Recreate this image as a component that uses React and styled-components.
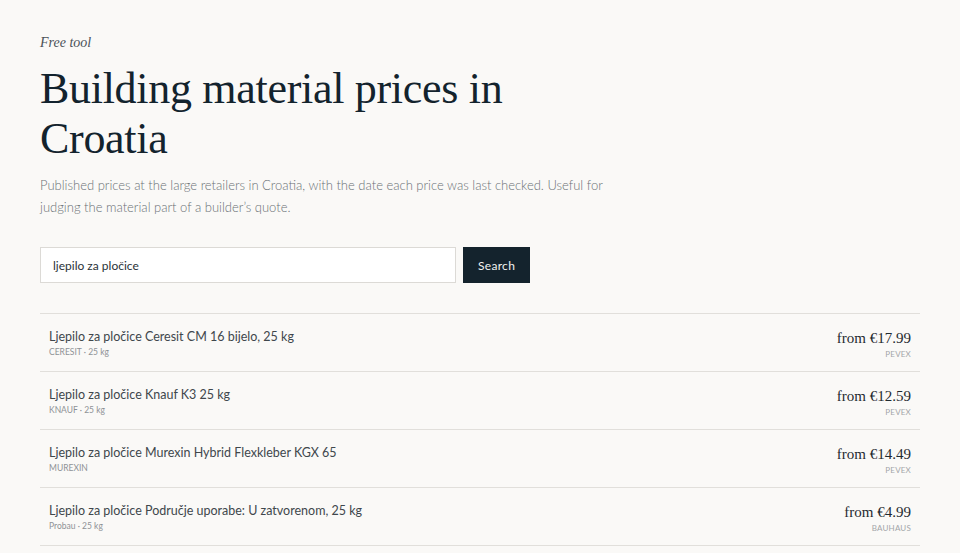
import React from "react";
import styled, { createGlobalStyle } from "styled-components";

const GlobalStyle = createGlobalStyle`
  html, body {
    margin: 0;
    padding: 0;
    background: #faf9f7;
  }
  body {
    font-family: Lato, "Noto Sans", sans-serif;
    color: #1b2a33;
  }
`;

const Page = styled.main`
  padding: 35px 40px 0;
  max-width: 880px;
`;

const Eyebrow = styled.p`
  margin: 0 0 13px;
  font-family: "Liberation Serif", serif;
  font-style: italic;
  font-size: 14px;
  color: #4a5257;
`;

const Title = styled.h1`
  margin: 0;
  max-width: 500px;
  font-family: "Liberation Serif", "DejaVu Serif", serif;
  font-weight: 400;
  font-size: 44px;
  line-height: 50px;
  letter-spacing: -0.3px;
  color: #13232d;
`;

const Lede = styled.p`
  margin: 10px 0 0;
  max-width: 600px;
  font-size: 13px;
  font-weight: 300;
  line-height: 22px;
  color: #6b7176;
`;

const SearchForm = styled.form`
  display: flex;
  gap: 7px;
  margin-top: 29px;
`;

const SearchInput = styled.input`
  box-sizing: border-box;
  width: 416px;
  height: 36px;
  padding: 0 12px;
  border: 1px solid #dcdad6;
  background: #fff;
  font-family: inherit;
  font-size: 12px;
  color: #2a3237;
  outline: none;
`;

const SearchButton = styled.button`
  height: 36px;
  padding: 0 15px;
  border: 0;
  background: #14232d;
  color: #f2f2f0;
  font-family: inherit;
  font-size: 12px;
  letter-spacing: 0.3px;
`;

const Results = styled.ul`
  list-style: none;
  margin: 30px 0 0;
  padding: 0;
  border-top: 1px solid #e1dfdb;
`;

const Row = styled.li`
  display: flex;
  justify-content: space-between;
  align-items: flex-start;
  height: 58px;
  padding: 15px 9px 0;
  box-sizing: border-box;
  border-bottom: 1px solid #e1dfdb;
`;

const Name = styled.div`
  font-size: 12.5px;
  color: #40474c;
  line-height: 16px;
`;

const Meta = styled.div`
  margin-top: 1px;
  font-size: 8.5px;
  color: #8e9296;
  line-height: 12px;
`;

const PriceBox = styled.div`
  text-align: right;
`;

const Price = styled.div`
  font-family: "Liberation Serif", serif;
  font-size: 15px;
  line-height: 18px;
  color: #1f2a30;
`;

const Store = styled.div`
  margin-top: 2px;
  font-size: 8px;
  letter-spacing: 0.2px;
  color: #a3a6a9;
`;

const items = [
  { name: "Ljepilo za pločice Ceresit CM 16 bijelo, 25 kg", meta: "CERESIT · 25 kg", price: "17.99", store: "PEVEX" },
  { name: "Ljepilo za pločice Knauf K3 25 kg", meta: "KNAUF · 25 kg", price: "12.59", store: "PEVEX" },
  { name: "Ljepilo za pločice Murexin Hybrid Flexkleber KGX 65", meta: "MUREXIN", price: "14.49", store: "PEVEX" },
  { name: "Ljepilo za pločice Područje uporabe: U zatvorenom, 25 kg", meta: "Probau · 25 kg", price: "4.99", store: "BAUHAUS" },
];

export default function App() {
  return (
    <>
      <GlobalStyle />
      <Page>
        <Eyebrow>Free tool</Eyebrow>
        <Title>Building material prices in Croatia</Title>
        <Lede>
          Published prices at the large retailers in Croatia, with the date each price was last
          checked. Useful for judging the material part of a builder’s quote.
        </Lede>
        <SearchForm onSubmit={(e) => e.preventDefault()}>
          <SearchInput defaultValue="ljepilo za pločice" />
          <SearchButton type="submit">Search</SearchButton>
        </SearchForm>
        <Results>
          {items.map((it) => (
            <Row key={it.name}>
              <div>
                <Name>{it.name}</Name>
                <Meta>{it.meta}</Meta>
              </div>
              <PriceBox>
                <Price>from €{it.price}</Price>
                <Store>{it.store}</Store>
              </PriceBox>
            </Row>
          ))}
        </Results>
      </Page>
    </>
  );
}
